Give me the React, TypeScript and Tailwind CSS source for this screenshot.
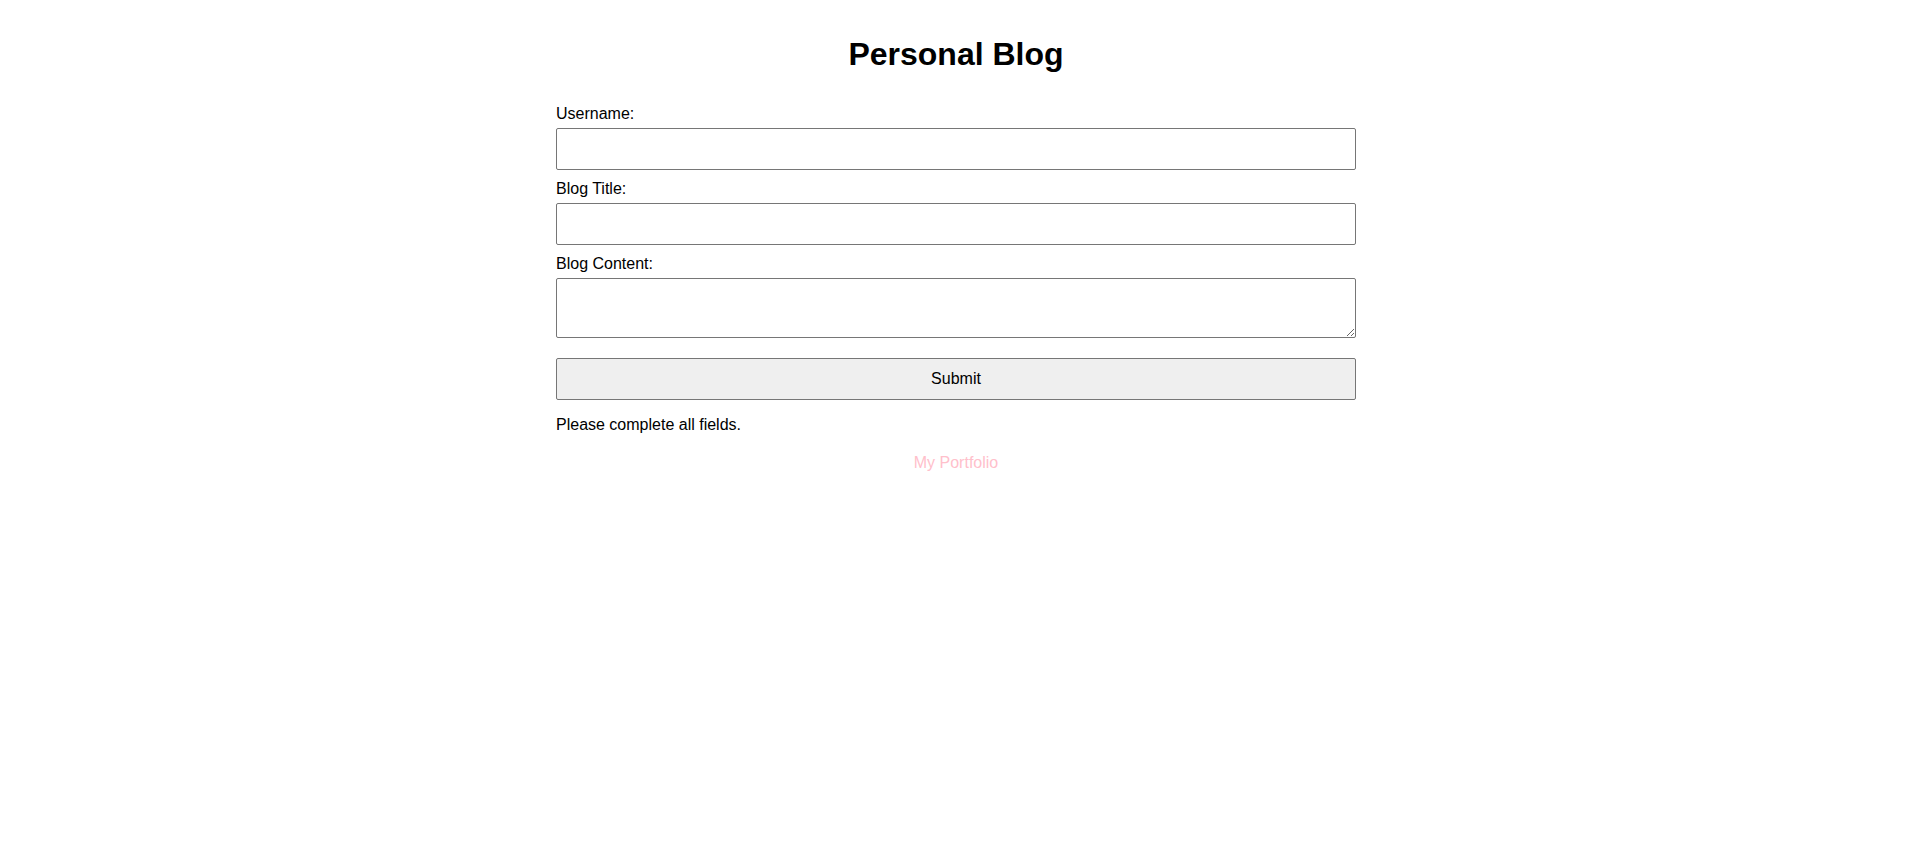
import React from "react";

export default function App() {
  return (
    <div
      className="min-h-[854px] w-full bg-white pr-[4px] text-black"
      style={{ fontFamily: '"Liberation Sans", Arial, sans-serif' }}
    >
      <div className="mx-auto w-[800px] pt-[36px]">
        <h1 className="text-center text-[32px] font-bold leading-[37px]">Personal Blog</h1>
        <form className="mt-[32px] flex flex-col" onSubmit={(e) => e.preventDefault()}>
          <label className="block text-[16px] leading-[18px]">Username:</label>
          <input
            type="text"
            className="mt-[5px] box-border block h-[42px] w-full rounded-[2px] border border-[#767676] bg-white px-2 text-[16px] outline-none"
          />
          <label className="mt-[10px] block text-[16px] leading-[18px]">Blog Title:</label>
          <input
            type="text"
            className="mt-[5px] box-border block h-[42px] w-full rounded-[2px] border border-[#767676] bg-white px-2 text-[16px] outline-none"
          />
          <label className="mt-[10px] block text-[16px] leading-[18px]">Blog Content:</label>
          <textarea className="mt-[5px] box-border block h-[60px] w-full resize rounded-[2px] border border-[#767676] bg-white px-2 text-[16px] outline-none" />
          <button
            type="submit"
            className="mt-[20px] box-border flex h-[42px] w-full items-center justify-center rounded-[2px] border border-[#767676] bg-[#efefef] text-[16px] leading-[18px] text-black"
          >
            Submit
          </button>
        </form>
        <p className="mt-[16px] text-[16px] leading-[18px]">Please complete all fields.</p>
        <div className="mt-[20px] text-center text-[16px] leading-[18px]">
          <a href="#" className="text-[#ffc0cb] no-underline">
            My Portfolio
          </a>
        </div>
      </div>
    </div>
  );
}
